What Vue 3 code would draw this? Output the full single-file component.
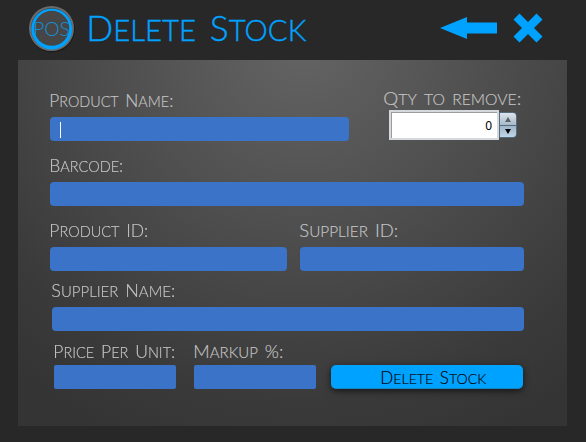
<script setup>
import { h, ref } from 'vue'

const quantity = ref(0)

// Splits a caption into capitals and smaller capitals, fitted to a set width.
const Caption = (props) => {
  const runs = props.text.match(/[a-z]+|[^a-z]+/g)
  return h('svg', { class: 'caption', width: props.width, height: props.size * 1.2, 'aria-label': props.text }, [
    h(
      'text',
      { x: -0.7, y: props.base, 'font-size': props.size, textLength: props.width, lengthAdjust: 'spacingAndGlyphs' },
      runs.map((run) =>
        /[a-z]/.test(run) ? h('tspan', { 'font-size': props.size * 0.83 }, run.toUpperCase()) : run
      )
    )
  ])
}
Caption.props = ['text', 'width', 'size', 'base']
</script>

<template>
  <div class="window">
    <header class="header">
      <svg class="logo" width="48" height="48" viewBox="0 0 48 48">
        <circle cx="24" cy="24.500" r="23" fill="#1d1d1d" />
        <circle cx="23.500" cy="23.500" r="21.500" fill="#3b3b3b" stroke="#6b6b6b" stroke-width="2" />
        <circle cx="23.700" cy="24" r="20.500" fill="#00a2ff" />
        <circle cx="23.700" cy="23.300" r="17.500" fill="#464646" />
        <text x="5" y="31" font-size="20.500" textLength="37" lengthAdjust="spacingAndGlyphs" fill="#168fd8">POS</text>
      </svg>
      <h1 class="title"><Caption text="Delete Stock" :width="220" :size="34.500" :base="34" /></h1>
      <svg class="back" width="57" height="24" viewBox="0 0 57 24">
        <path d="M0 11L27 0V5.500H57V16.500H27V22z" fill="#00a2ff" />
      </svg>
      <svg class="close" width="30" height="30" viewBox="0 0 30 30">
        <path d="M6.500 .5L15 9L23.500 .5L29.500 6.500L21 15L29.500 23.500L23.500 29.500L15 21L6.500 29.500L.5 23.500L9 15L.5 6.500z" fill="#00a2ff" />
      </svg>
    </header>

    <main class="panel">
      <div class="row first">
        <label class="group name"><Caption text="Product Name:" :width="124" :size="18" :base="17" /><input class="field" autofocus /><i class="caret"></i></label>
        <div class="quantity">
          <Caption text="Qty to remove:" :width="138" :size="18" :base="17" />
          <div class="spinner">
            <output class="number">{{ quantity }}</output>
            <div class="steps">
              <button class="step" aria-label="Increase" @click="quantity++"><svg width="6" height="5"><path d="M3 0L6 5H0z" fill="#59636b" /></svg></button>
              <button class="step down" aria-label="Decrease" @click="quantity = Math.max(0, quantity - 1)"><svg width="6" height="5"><path d="M0 0H6L3 5z" fill="#000" /></svg></button>
            </div>
          </div>
        </div>
      </div>
      <label class="group barcode"><Caption text="Barcode:" :width="74" :size="18" :base="17" /><input class="field" /></label>
      <div class="row ids">
        <label class="group product-id"><Caption text="Product ID:" :width="99" :size="18" :base="17" /><input class="field" /></label>
        <label class="group supplier-id"><Caption text="Supplier ID:" :width="99" :size="18" :base="17" /><input class="field" /></label>
      </div>
      <label class="group supplier"><Caption text="Supplier Name:" :width="124" :size="18" :base="17" /><input class="field" /></label>
      <div class="row last">
        <label class="group small"><Caption text="Price Per Unit:" :width="122" :size="18" :base="17" /><input class="field" /></label>
        <label class="group small"><Caption text="Markup %:" :width="90" :size="18" :base="17" /><input class="field" /></label>
        <button class="submit"><Caption text="Delete Stock" :width="106" :size="17.500" :base="17.500" /></button>
      </div>
    </main>
  </div>
</template>

<style>
body { margin: 0; background: #282828; overflow: hidden; }
</style>

<style scoped>
* { box-sizing: border-box; }
.window { width: 586px; height: 442px; padding: 0 19px 0 18px; background: #282828; font-family: Lato, sans-serif; font-weight: 300; }
.header { height: 60px; display: flex; align-items: flex-start; padding: 5px 23px 0 10px; }
.title { margin: 2px 0 0 11px; font-weight: 300; line-height: 0; color: #00a2ff; }
.back { margin: 12px 0 0 133px; }
.close { margin: 8px 0 0 16px; }
.panel { height: 366px; padding: 30px 43px 0 32px; background: radial-gradient(circle 440px at 285px -20px, #646464 0, #565656 28%, #484848 55%, #3a3a3a 82%, #343434 100%); color: #c4c4c4; }
.caption { display: block; overflow: visible; fill: currentColor; stroke: currentColor; stroke-width: .15px; word-spacing: 2px; height: 20px; flex: none; }
.title .caption { height: 42px; word-spacing: 4px; stroke-width: .4px; }
.row { display: flex; }
.group { display: flex; flex-direction: column; gap: 7px; position: relative; }
.field { display: block; width: 100%; height: 24px; margin: 0; padding: 0 10px; border: 0; border-radius: 4px; background: #3b73c8; color: #fff; outline: 0; caret-color: transparent; }
.caret { position: absolute; left: 10px; bottom: 3px; width: 1px; height: 16px; background: #fff; }
.first { height: 51px; }
.name { width: 299px; }
.quantity { margin: -2px 0 0 35px; }
.spinner { display: flex; align-items: center; margin: 2px 0 0 5px; }
.number { width: 110px; height: 30px; padding: 0 5px 0 0; border: 2px solid #d5d8dc; box-shadow: inset 1px 1px 0 #9c9c9c; background: #fff; color: #000; font: 12px/28px "Noto Sans", sans-serif; text-align: right; }
.steps { width: 18px; height: 26px; border: 1px solid #526b80; border-radius: 0 4px 4px 0; overflow: hidden; }
.step { display: flex; align-items: center; justify-content: center; width: 100%; height: 12px; padding: 0; border: 0; background: linear-gradient(#dce4eb, #a8b9c8); }
.step.down { border-top: 1px solid #526b80; background: linear-gradient(#9eb5c8, #c0d5e7); }
.barcode { margin-top: 14px; }
.ids { gap: 13px; margin-top: 14px; }
.product-id { width: 237px; }
.supplier-id { width: 224px; }
.supplier { margin: 9px 0 0 2px; }
.last { margin: 10px 0 0 4px; align-items: flex-end; }
.small { width: 122px; gap: 4px; margin-right: 18px; }
.small .field { border-radius: 2px; }
.submit { display: flex; align-items: flex-start; justify-content: center; width: 192px; height: 24px; margin-left: -3px; padding: 1px 0 0 14px; border: 0; border-bottom: 1px solid #1585c4; border-radius: 5px; background: #00a2ff; box-shadow: 0 2px 7px rgba(0, 0, 0, .65); color: #000; font: inherit; }
</style>
